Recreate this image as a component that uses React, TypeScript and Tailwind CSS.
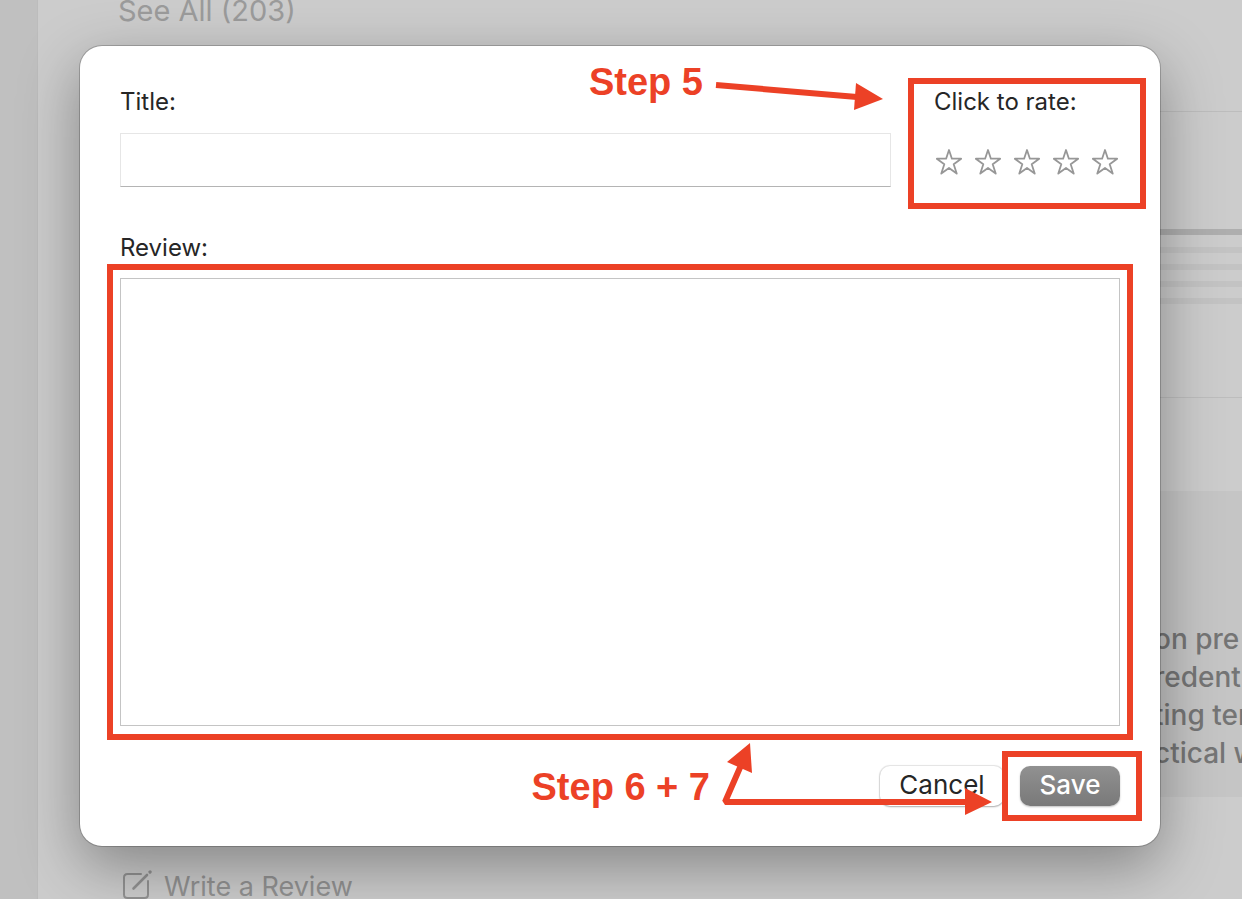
import { useState } from "react";

const STARS = [1, 2, 3, 4, 5];

function StarOutline({ filled }: { filled: boolean }) {
  return (
    <svg viewBox="0 0 26 26" className="size-[26px]" fill={filled ? "#979797" : "none"} stroke="#979797" strokeWidth="1.8" strokeLinejoin="round" aria-hidden="true">
      <path d="M13 1 L15.9 9.7 L25.2 9.7 L17.7 15.2 L20.7 24.6 L13 19 L5.3 24.6 L8.3 15.2 L0.8 9.7 L10.1 9.7 Z" />
    </svg>
  );
}

function ComposeIcon() {
  return (
    <svg viewBox="0 0 30 30" className="size-[30px] shrink-0" fill="none" stroke="currentColor" strokeWidth="2" strokeLinecap="round" strokeLinejoin="round" aria-hidden="true">
      <path d="M19 4 H5.5 Q2 4 2 7.5 V24.5 Q2 28 5.5 28 H22.5 Q26 28 26 24.5 V11" />
      <path d="M11.5 18.5 L25 5" strokeWidth="2.6" />
      <path d="M28 2 L28.1 1.9" strokeWidth="3.2" />
    </svg>
  );
}

function StorePage() {
  return (
    <div className="flex min-h-screen bg-[#cccccc]">
      <aside className="w-[38px] shrink-0 border-r border-[#bcbcbc] bg-[#c0c0c0]" />
      <main className="min-w-0 grow overflow-hidden pl-20">
        <a href="#all" className="block text-[29px] leading-[22px] text-[#9b9b9b]">See All (203)</a>
        <hr className="mt-[89px] border-[#bdbdbd]" />
        <div className="mt-[117px] flex flex-col gap-[11px]">
          <div className="mb-px h-1.5 bg-[#aeaeae]" />
          <div className="h-1.5 bg-[#c3c3c3]" />
          <div className="h-1.5 bg-[#c3c3c3]" />
          <div className="h-1.5 bg-[#c3c3c3]" />
          <div className="h-1.5 bg-[#c3c3c3]" />
        </div>
        <hr className="mt-[93px] border-[#bdbdbd]" />
        <section className="mt-[93px] flex h-[306px] justify-end bg-[#c5c5c5] pt-[129px]">
          <p className="w-[88px] shrink-0 whitespace-nowrap text-[28px] leading-[38px] font-medium text-[#757575]">
            on pre<br />redent<br />ting ter<br />ctical w
          </p>
        </section>
        <a href="#write" className="mt-[73px] ml-1 flex h-[26px] items-start gap-3 text-[27px] leading-[34px] text-[#929292]">
          <ComposeIcon />
          Write a Review
        </a>
      </main>
    </div>
  );
}

export default function App() {
  const [rating, setRating] = useState(0);
  return (
    <div className="relative h-screen overflow-hidden font-['Inter',sans-serif]">
      <StorePage />
      <div className="absolute inset-0 pt-[46px] pr-[82px] pl-20">
        <form
          role="dialog"
          aria-label="Write a Review"
          onSubmit={(e) => e.preventDefault()}
          className="rounded-[22px] bg-white p-10 text-2xl leading-8 text-[#262626] shadow-[0_0_0_1px_rgba(0,0,0,0.2),0_20px_60px_rgba(0,0,0,0.35)]"
        >
          <div className="flex gap-[43px]">
            <div className="min-w-0 grow">
              <label htmlFor="title" className="block">Title:</label>
              <input id="title" type="text" className="mt-[15px] block h-[54px] w-full border border-[#e6e6e6] border-b-[#b4b4b4] px-3 outline-none" />
            </div>
            <div className="relative w-[186px] shrink-0">
              <div id="rate">Click to rate:</div>
              <div role="group" aria-labelledby="rate" className="mt-[15px] flex h-[54px] items-center justify-between px-[2px] pt-1">
                {STARS.map((n) => (
                  <button key={n} type="button" aria-label={`${n} stars`} onClick={() => setRating(n)}>
                    <StarOutline filled={n <= rating} />
                  </button>
                ))}
              </div>
              <div className="pointer-events-none absolute -inset-x-[26px] -top-2 -bottom-[22px] border-6 border-[#ec4126]" />
              <div className="pointer-events-none absolute -top-6 right-full mr-[51px] flex items-center gap-3 whitespace-nowrap font-['Liberation_Sans',sans-serif] text-[38px] leading-10 font-bold text-[#ec4126]">
                Step 5
                <svg viewBox="0 0 168 40" className="h-10 w-[168px] overflow-visible" aria-hidden="true">
                  <path d="M1 23 L142 35" stroke="#ec4126" strokeWidth="6" />
                  <path d="M141 21 L168 37 L139 48 Z" fill="#ec4126" />
                </svg>
              </div>
            </div>
          </div>

          <label htmlFor="review" className="mt-[45px] block">Review:</label>
          <div className="relative mt-[14px]">
            <textarea id="review" className="block h-[448px] w-full resize-none border border-[#c4c4c4] p-3 outline-none" />
            <div className="pointer-events-none absolute -inset-x-[13px] -inset-y-[14px] border-6 border-[#ec4126]" />
          </div>

          <div className="relative mt-10 flex justify-end gap-4 text-[26px]">
            <button type="button" className="h-10 w-[124px] rounded-[10px] bg-white pb-0.5 shadow-[0_0_1px_1px_rgba(0,0,0,0.1),0_1px_2px_rgba(0,0,0,0.25)]">Cancel</button>
            <div className="relative">
              <button type="submit" className="h-10 w-[100px] rounded-[10px] bg-linear-to-b from-[#919191] to-[#797979] pb-0.5 font-medium text-white shadow-[0_1px_2px_rgba(0,0,0,0.25)]">Save</button>
              <div className="pointer-events-none absolute -inset-y-[15px] -right-[22px] -left-[18px] border-6 border-[#ec4126]" />
            </div>
            <div className="pointer-events-none absolute -top-6 right-32 flex items-end gap-3 whitespace-nowrap font-['Liberation_Sans',sans-serif] text-[38px] font-bold text-[#ec4126]">
              <span className="pb-[9px] leading-10">Step 6 + 7</span>
              <svg viewBox="0 0 270 74" className="h-[74px] w-[270px]" aria-hidden="true">
                <path d="M245 60 H3 L20 21" fill="none" stroke="#ec4126" strokeWidth="6" strokeLinejoin="bevel" />
                <path d="M28 1 L5 20 L30 31 Z M243 46 L270 60 L243 73 Z" fill="#ec4126" />
              </svg>
            </div>
          </div>
        </form>
      </div>
    </div>
  );
}
